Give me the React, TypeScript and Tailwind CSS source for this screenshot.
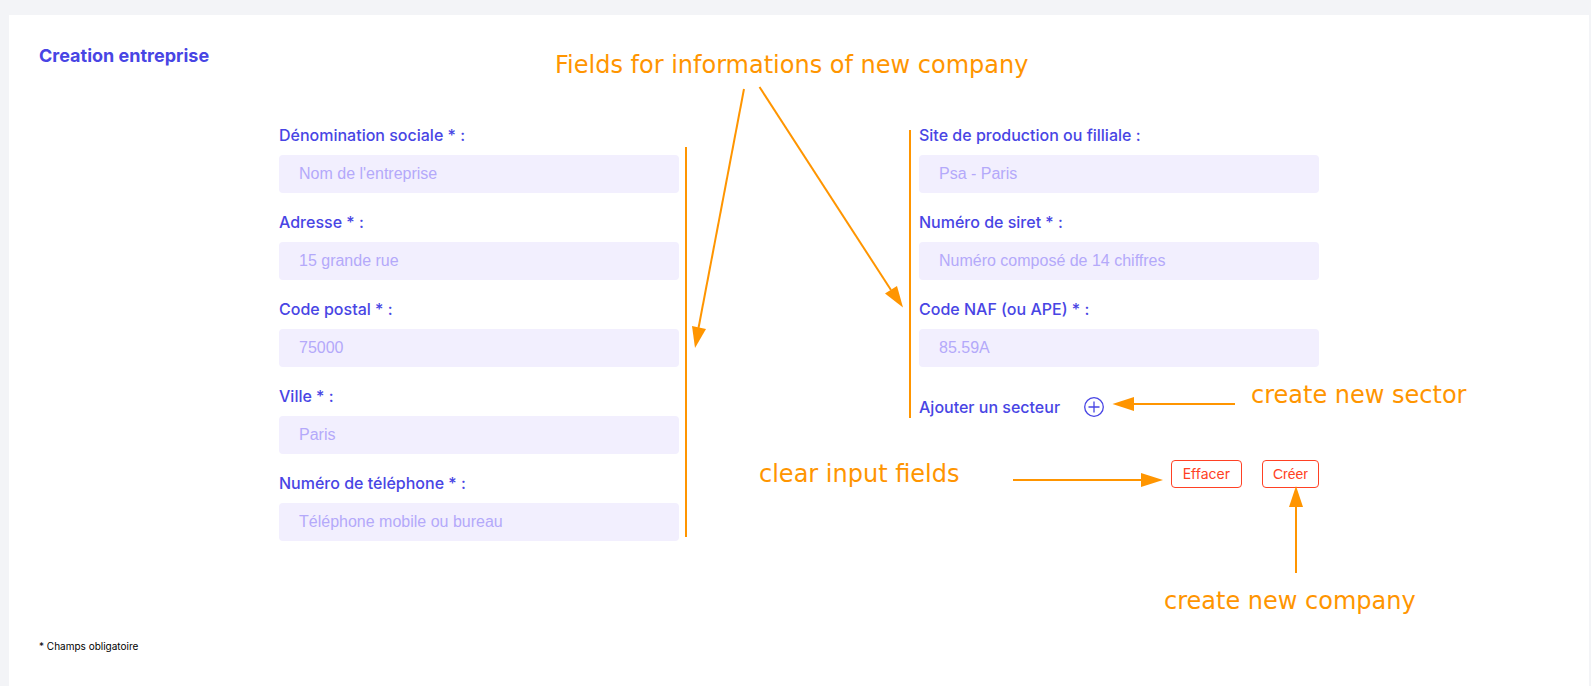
import { useState } from "react";

type Field = { id: string; label: string; placeholder: string };

const companyFields: Field[] = [
  { id: "denomination", label: "Dénomination sociale * :", placeholder: "Nom de l'entreprise" },
  { id: "adresse", label: "Adresse * :", placeholder: "15 grande rue" },
  { id: "code-postal", label: "Code postal * :", placeholder: "75000" },
  { id: "ville", label: "Ville * :", placeholder: "Paris" },
  { id: "telephone", label: "Numéro de téléphone * :", placeholder: "Téléphone mobile ou bureau" },
];

const legalFields: Field[] = [
  { id: "site", label: "Site de production ou filliale :", placeholder: "Psa - Paris" },
  { id: "siret", label: "Numéro de siret * :", placeholder: "Numéro composé de 14 chiffres" },
  { id: "naf", label: "Code NAF (ou APE) * :", placeholder: "85.59A" },
];

type Values = Record<string, string>;

function FieldRow({
  field,
  value,
  onChange,
}: {
  field: Field;
  value: string;
  onChange: (id: string, value: string) => void;
}) {
  return (
    <div className="flex flex-col gap-2.5">
      <label htmlFor={field.id} className="text-base leading-5 font-medium text-[#4845e4]">
        {field.label}
      </label>
      <input
        id={field.id}
        type="text"
        value={value}
        placeholder={field.placeholder}
        onChange={(e) => onChange(field.id, e.target.value)}
        className="h-[38px] w-full rounded bg-[#f2effe] px-5 font-['Liberation_Sans',sans-serif] text-base text-[#4845e4] outline-none placeholder:text-[#b4a9fa]"
      />
    </div>
  );
}

function PlusCircle() {
  return (
    <svg viewBox="0 0 20 20" className="size-5" fill="none" stroke="currentColor" strokeWidth="1.3" aria-hidden="true">
      <circle cx="10" cy="10" r="9.3" />
      <path d="M10 4.5v11M4.5 10h11" />
    </svg>
  );
}

const noteClass =
  "absolute whitespace-nowrap font-['DejaVu_Sans',sans-serif] text-2xl leading-8 text-[#ff9500]";

function Annotations() {
  return (
    <div className="pointer-events-none absolute inset-0">
      <svg width="1040" height="460" className="absolute top-0 left-0 overflow-visible" aria-hidden="true">
        <g stroke="#ff9500" strokeWidth="2">
          <path d="M407 22V412" />
          <path d="M631 5V293" />
          <path d="M465 -36L419.5 203" />
          <path d="M480.5 -38L612 165" />
          <path d="M956 279H855" />
          <path d="M734 355H862" />
          <path d="M1017 448V382" />
        </g>
        <g fill="#ff9500">
          <path d="M416 223L413 201L427 204Z" />
          <path d="M624 182.500L606 168.500L618 161Z" />
          <path d="M833.500 279L855 272V286Z" />
          <path d="M884 355L862 348V362Z" />
          <path d="M1017 361L1010 382H1024Z" />
        </g>
      </svg>
      <p className={`${noteClass} -top-[76px] left-[276px]`}>Fields for informations of new company</p>
      <p className={`${noteClass} top-[254px] left-[972px]`}>create new sector</p>
      <p className={`${noteClass} top-[333px] left-[480px]`}>clear input fields</p>
      <p className={`${noteClass} top-[460px] left-[885px]`}>create new company</p>
    </div>
  );
}

export default function App() {
  const [values, setValues] = useState<Values>({});
  const update = (id: string, value: string) => setValues((v) => ({ ...v, [id]: value }));

  return (
    <div className="min-h-screen overflow-hidden bg-[#f3f4f7] pt-[15px] pr-0.5 pl-[9px] font-['Inter',sans-serif]">
      <main className="min-h-[calc(100vh-15px)] bg-white px-[30px] pt-[27px] pb-7">
        <h1 className="text-lg leading-7 font-bold text-[#4845e4]">Creation entreprise</h1>

        <form
          className="relative mx-auto mt-[55px] grid max-w-[1040px] grid-cols-2 gap-60"
          onSubmit={(e) => e.preventDefault()}
          onReset={() => setValues({})}
        >
          <div className="flex flex-col gap-[19px]">
            {companyFields.map((f) => (
              <FieldRow key={f.id} field={f} value={values[f.id] ?? ""} onChange={update} />
            ))}
          </div>

          <div className="flex flex-col gap-[19px]">
            {legalFields.map((f) => (
              <FieldRow key={f.id} field={f} value={values[f.id] ?? ""} onChange={update} />
            ))}
            <div className="mt-[9px] flex items-center gap-6 text-[#4845e4]">
              <span id="secteur" className="text-base leading-6 font-medium">
                Ajouter un secteur
              </span>
              <button type="button" aria-labelledby="secteur" className="cursor-pointer">
                <PlusCircle />
              </button>
            </div>
            <div className="mt-[22px] flex justify-end gap-5 text-sm leading-5 text-[#ff4124]">
              <button type="reset" className="h-7 cursor-pointer rounded border border-current px-[11px]">
                Effacer
              </button>
              <button
                type="submit"
                className="h-7 cursor-pointer rounded border border-current px-2.5 font-['Liberation_Sans',sans-serif]"
              >
                Créer
              </button>
            </div>
          </div>

          <Annotations />
        </form>

        <p className="mt-[97px] text-[10px] leading-4 text-black">* Champs obligatoire</p>
      </main>
    </div>
  );
}
